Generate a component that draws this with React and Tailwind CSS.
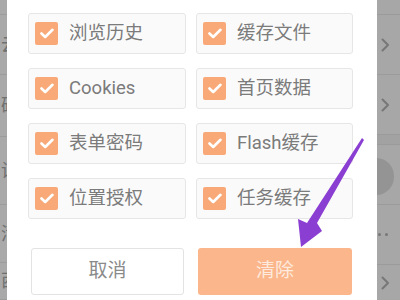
import React from "react";

const items = [
  ["浏览历史", "缓存文件"],
  ["Cookies", "首页数据"],
  ["表单密码", "Flash缓存"],
  ["位置授权", "任务缓存"],
];

const leftRows = [
  { c: "云", h: "h-[60px]" },
  { c: "码", h: "h-[62px]" },
  { c: "设", h: "h-[68px]" },
  { c: "清", h: "h-[58px]" },
  { c: "西", h: "h-[37px]" },
];

function Check() {
  return (
    <span className="flex h-[23px] w-[23px] shrink-0 items-center justify-center rounded-[2px] bg-[#f8a977]">
      <svg width="14" height="11" viewBox="0 0 14 11" fill="none">
        <path d="M1.5 5.5 L5.2 9 L12.5 1.8" stroke="#fff" strokeWidth="2.6" strokeLinecap="round" strokeLinejoin="round" />
      </svg>
    </span>
  );
}

function Option({ label }) {
  return (
    <div className="flex h-[41px] items-center gap-[11px] rounded-[3px] border border-[#e6e6e6] bg-[#fafafa] pl-[6px]">
      <Check />
      <span className="text-[18.5px] leading-none text-[#7b7b7b]">{label}</span>
    </div>
  );
}

function Chevron() {
  return (
    <svg width="9" height="14" viewBox="0 0 9 14" fill="none">
      <path d="M1.5 1.5 L7 7 L1.5 12.5" stroke="#777" strokeWidth="2" strokeLinecap="round" strokeLinejoin="round" />
    </svg>
  );
}

export default function App() {
  return (
    <div
      className="relative flex h-[300px] w-[400px] overflow-hidden bg-white"
      style={{ fontFamily: "Roboto, 'Noto Sans CJK SC', sans-serif" }}
    >
      {/* left dimmed page */}
      <div className="flex w-[7px] shrink-0 flex-col overflow-hidden bg-[#a9a9a9] text-[18px] leading-none text-[#707070]">
        <div className="h-[15px] shrink-0 border-b border-[#9c9c9c]" />
        {leftRows.map(({ c, h }) => (
          <div key={c} className={`flex ${h} shrink-0 items-center justify-end border-b border-[#9c9c9c]`}>
            <span className="mr-[-12px] shrink-0">{c}</span>
          </div>
        ))}
      </div>

      {/* dialog */}
      <div className="flex w-[370px] shrink-0 flex-col bg-white">
        <div className="mt-[13px] grid grid-cols-[158px_157px] gap-x-[10px] gap-y-[14px] pl-[21px]">
          {items.map(([a, b]) => (
            <React.Fragment key={a}>
              <Option label={a} />
              <Option label={b} />
            </React.Fragment>
          ))}
        </div>
        <div className="mt-[29px] flex gap-[14px] pl-[24px]">
          <button className="flex h-[47px] w-[153px] items-center justify-center rounded-[3px] border border-[#e3e3e3] bg-white text-[19px] text-[#8a8a8a]">
            取消
          </button>
          <button className="flex h-[47px] w-[154px] items-center justify-center rounded-[3px] bg-[#fbb68c] text-[19px] text-[#feeadd]">
            清除
          </button>
        </div>
      </div>

      {/* right dimmed page */}
      <div className="flex flex-1 flex-col bg-[#a7a7a7]">
        <div className="h-[15px] shrink-0 border-b border-[#9b9b9b]" />
        <div className="flex h-[60px] shrink-0 items-center border-b border-[#9b9b9b] pl-[4px]">
          <Chevron />
        </div>
        <div className="flex h-[60px] shrink-0 items-center border-b border-[#9b9b9b] pl-[4px]">
          <Chevron />
        </div>
        <div className="h-[10px] shrink-0 border-b border-[#9b9b9b] bg-[#a2a2a2]" />
        <div className="relative h-[60px] shrink-0 overflow-hidden border-b border-[#9b9b9b]">
          <span className="absolute left-[-19px] top-[13px] h-[37px] w-[36px] rounded-full bg-[#949494]" />
        </div>
        <div className="flex h-[60px] shrink-0 items-center gap-[4px] border-b border-[#9b9b9b] pl-[1px]">
          <span className="h-[3px] w-[3px] rounded-full bg-[#777]" />
          <span className="h-[3px] w-[3px] rounded-full bg-[#777]" />
        </div>
        <div className="flex flex-1 items-center pl-[4px]">
          <Chevron />
        </div>
      </div>

      {/* purple annotation arrow */}
      <svg className="pointer-events-none absolute left-0 top-0" width="400" height="300" viewBox="0 0 400 300">
        <path d="M362 138 L364 140 L317 223 L322 231 L301 247 L298 219 L307 223 Z" fill="#8b3fd2" />
      </svg>
    </div>
  );
}
